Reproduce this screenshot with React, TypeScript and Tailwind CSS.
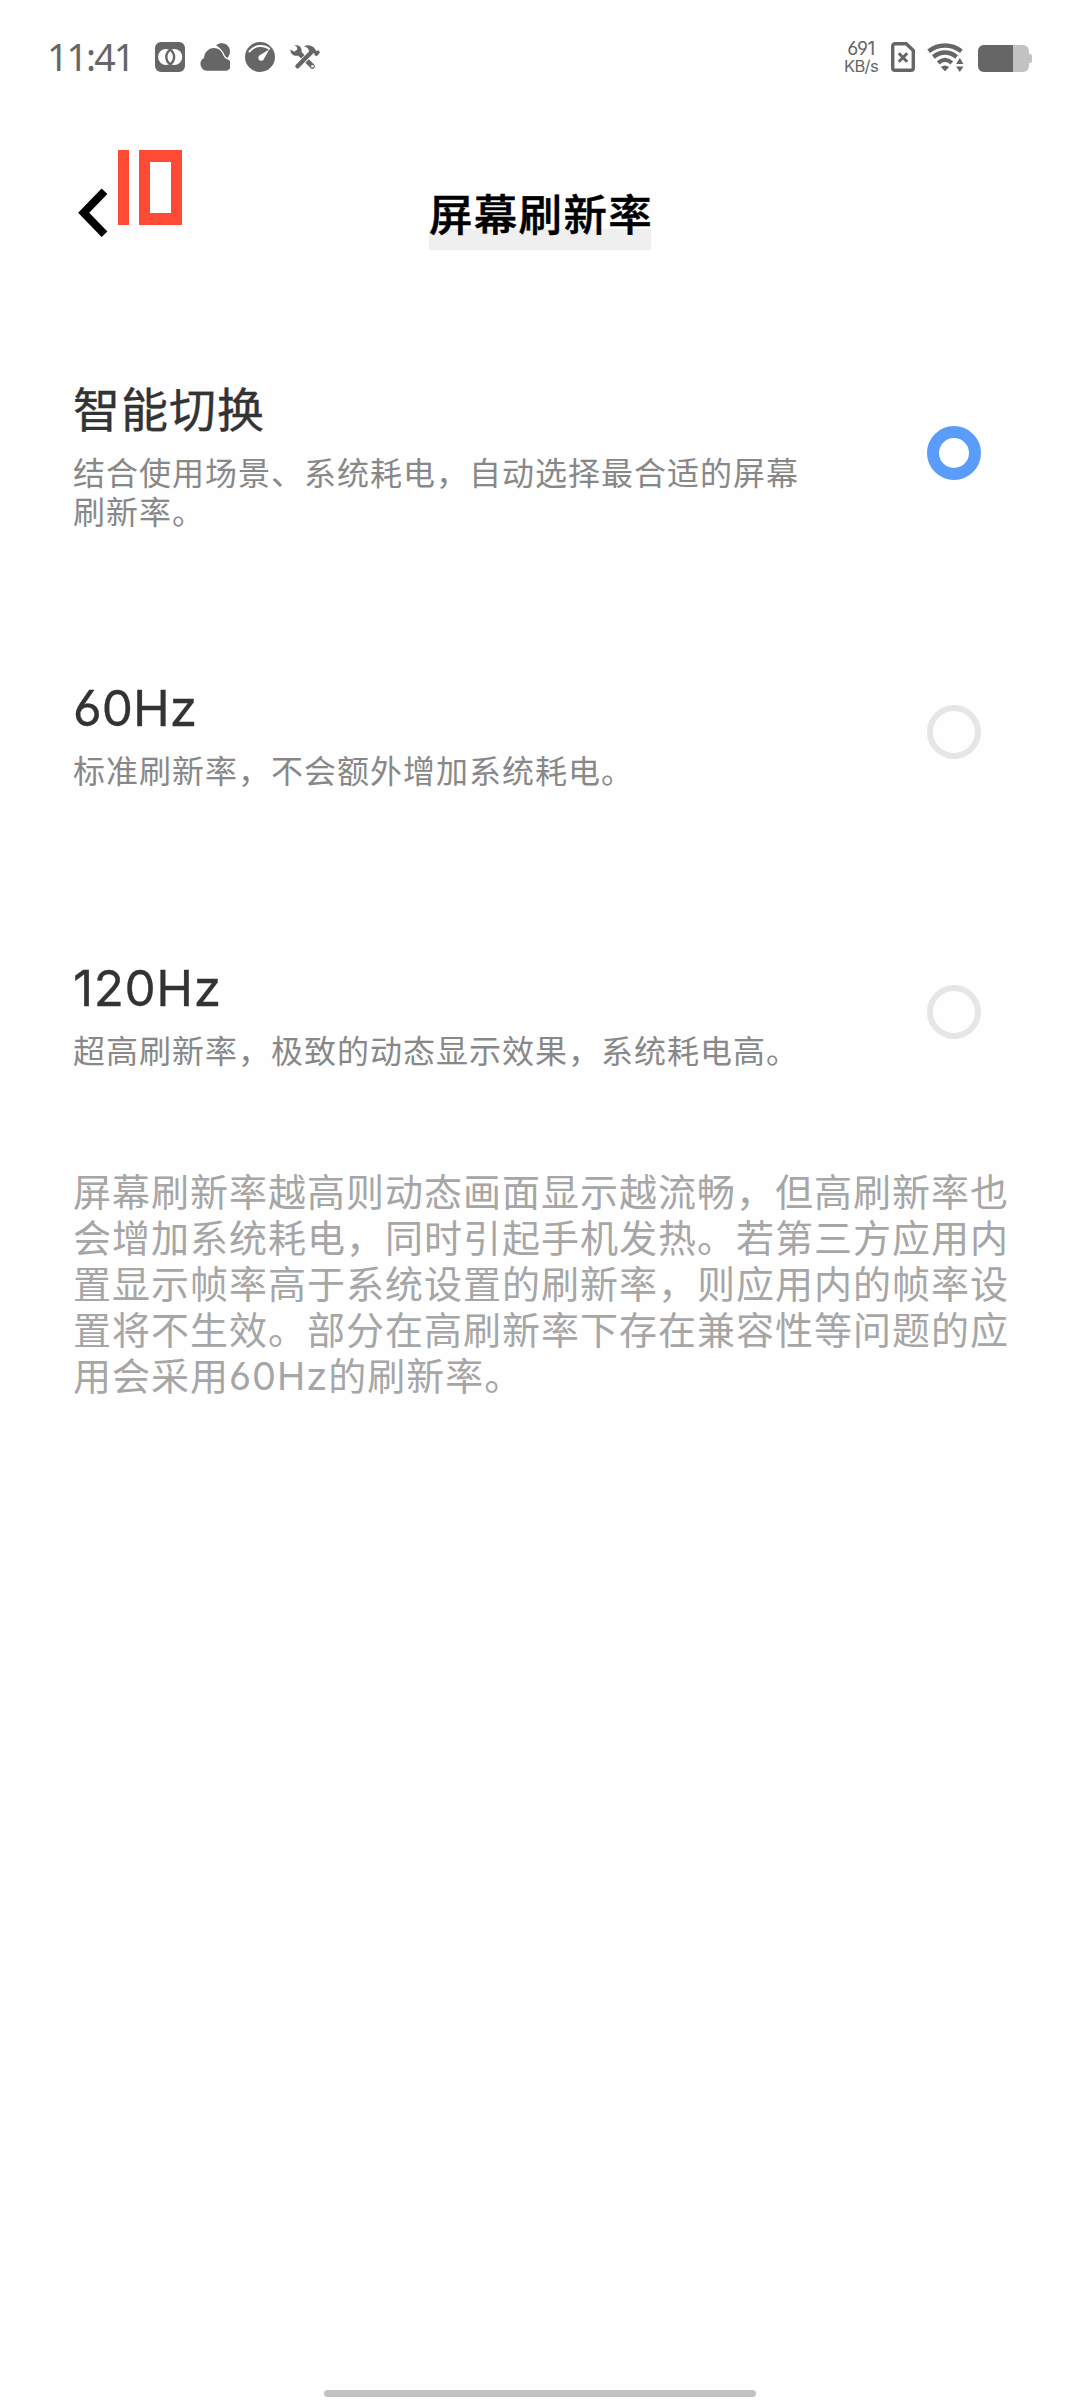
function StatusBar() {
  return (
    <div className="flex h-[114px] items-center justify-between pr-[48px] pl-[47px] text-[#666]">
      <div className="flex items-center">
        <span className="mb-[1px] w-[108px] font-['Noto_Sans',sans-serif] text-[37.500px] leading-none tracking-[-1.900px]">
          11:41
        </span>
        <div className="flex gap-[15px]">
          <svg width="30" height="30" viewBox="0 0 30 30">
            <rect width="30" height="30" rx="6" fill="currentColor" />
            <ellipse cx="11" cy="15" rx="7.9" ry="8" fill="#fff" />
            <ellipse cx="19.3" cy="15" rx="7.9" ry="8" fill="#fff" />
            <path d="M15.2 7.6c-5.200 4-5.200 10.800 0 14.800c5.200-4 5.200-10.800 0-14.800z" fill="#fff" stroke="currentColor" strokeWidth="2.400" />
          </svg>
          <svg width="30" height="30" viewBox="0 0 30 30" fill="currentColor">
            <path d="M6.500 28.700a6.800 6.800 0 0 1-2.500-12.700C4.200 10.500 8.500 6 13.800 6C18.500 6 21.800 8.800 23.300 13.500C24.500 15.500 25.500 16.700 27.500 17.300a6 6 0 0 1-3.500 11.400z" />
            <path d="M16 3.200C20.500-.5 27.500 1 29.500 6.400c1.100 3.700.2 7.200-2 9.600c-1-.5-2-1.200-2.600-2.200C23.500 9.500 20.600 6.300 16 3.200z" />
          </svg>
          <svg width="30" height="30" viewBox="0 0 30 30">
            <circle cx="15" cy="15" r="15" fill="currentColor" />
            <path d="M4.600 9.400C9.500 3 19 2.300 24.300 6.800" fill="none" stroke="#fff" strokeWidth="2" strokeLinecap="round" />
            <path d="M24.200 7.400L19.200 16.600a3 3 0 1 1-4.500-3.300z" fill="#fff" />
          </svg>
          <svg width="30" height="30" viewBox="0 0 30 30" fill="none" stroke="currentColor">
            <path d="M9 11L22.400 24.300" strokeWidth="5" strokeLinecap="round" />
            <path d="M4.500 3.600C8.500 2 12.500 5.500 11.500 10L8.500 13.500C4 14.800-.3 11.500.6 7.400L4.200 9.800L7.300 7.600L6.800 4.800z" fill="currentColor" stroke="none" />
            <circle cx="22.500" cy="24.300" r="1.300" fill="#fff" stroke="none" />
            <path d="M18 13.800L12.500 19.300" stroke="#fff" strokeWidth="6" />
            <path d="M21.800 9.800L7.500 24.300" strokeWidth="4.400" strokeLinecap="round" />
            <path d="M14 4.300C17 2.500 21.500 3 24.300 6L26.300 9L28.600 8.200L30 10.500L26.800 14.200L24.300 13L24.400 11L21.500 11.300L18.800 8.600C18.300 6.300 16.800 5 14 4.300z" fill="currentColor" stroke="none" />
          </svg>
        </div>
      </div>
      <div className="flex items-center">
        <div className="mr-[12px] flex w-[36px] flex-col items-center font-['Inter',sans-serif] whitespace-nowrap [font-feature-settings:'cv03','cv04']">
          <span className="text-[19px] leading-[16px] tracking-[-0.500px]">691</span>
          <span className="mt-[1px] text-[16.500px] leading-[16px] tracking-[-0.600px]">KB/s</span>
        </div>
        <svg className="mr-[12px]" width="24" height="30" viewBox="0 0 24 30" fill="none" stroke="currentColor">
          <path d="M4 1.700h11.200L22.300 8.500V26a2.300 2.300 0 0 1-2.300 2.300H4A2.300 2.300 0 0 1 1.700 26V4A2.300 2.300 0 0 1 4 1.700z" strokeWidth="3.400" />
          <path d="M7.800 11.300l8.400 8.400M16.200 11.300l-8.400 8.400" strokeWidth="3" />
        </svg>
        <svg className="mr-[13px]" width="38" height="30" viewBox="0 0 38 30" fill="none" stroke="currentColor" strokeWidth="4.300">
          <path d="M1.600 9.200C11.500 1.600 24.500 1.600 34.400 9.200" />
          <path d="M6.400 15C13.500 9 22.500 9 29.600 15" />
          <path d="M11.200 20.800C15.600 17 20.400 17 24.800 20.800" />
          <path d="M13.800 25q4.200-3.200 8.400 0L18 29.300z" fill="currentColor" stroke="none" />
          <path d="M32.800 16l3.700 6h-7.400zM32.800 30l3.700-5.500h-7.400z" fill="currentColor" stroke="none" />
        </svg>
        <div className="flex items-center">
          <div className="mt-[2px] flex h-[27px] w-[51px] overflow-hidden rounded-[6px] bg-[#c2c2c2]">
            <div className="w-[35px] bg-[#666]" />
          </div>
          <div className="mt-[2px] h-[9px] w-[3px] rounded-r-[2px] bg-[#c2c2c2]" />
        </div>
      </div>
    </div>
  );
}

/* Live frame-rate counter, drawn over the page by the developer overlay. */
function FrameRateOverlay() {
  return (
    <div aria-label="10" className="absolute top-[150px] left-[118px] flex h-[75px] gap-[10px]">
      <div className="w-[11px] bg-[#ff4a36]" />
      <div className="w-[43px] border-x-[11px] border-y-[12px] border-[#ff4a36]" />
    </div>
  );
}

function Header() {
  return (
    <header className="relative flex h-[199px] justify-center pt-[69px]">
      <svg className="absolute top-[74px] left-[78px]" width="30" height="50" viewBox="0 0 30 50" fill="none" stroke="#000" strokeWidth="8">
        <path d="M26.500 3.300L5.700 24.700L26.500 46.300" />
      </svg>
      <h1 className="flex h-[67px] w-[222px] items-start justify-center bg-[linear-gradient(#fefefe_0_46px,#efefef_46px)] pl-[2px] font-['Noto_Sans_CJK_SC',sans-serif] text-[43.500px] leading-[60px] font-medium tracking-[1.300px] whitespace-nowrap text-black [-webkit-text-stroke:0.500px_#000]">
        屏幕刷新率
      </h1>
    </header>
  );
}

function Radio({ checked }: { checked: boolean }) {
  return (
    <span
      className={
        checked
          ? "mt-[113px] block size-[54px] shrink-0 rounded-full border-[12px] border-[#5a9cfa]"
          : "mt-[113px] block size-[54px] shrink-0 rounded-full border-[6px] border-[#e6e6e6]"
      }
    />
  );
}

type Option = { title: string; description: string; checked: boolean; row: string; heading: string };

const options: Option[] = [
  {
    title: "智能切换",
    description: "结合使用场景、系统耗电，自动选择最合适的屏幕刷新率。",
    checked: true,
    row: "h-[279px] pt-[67px]",
    heading: "text-[47px] leading-[60px] tracking-[1px] text-[#333] [-webkit-text-stroke:0.400px_#333]",
  },
  {
    title: "60Hz",
    description: "标准刷新率，不会额外增加系统耗电。",
    checked: false,
    row: "h-[280px] pt-[86px]",
    heading: "text-[49.500px] leading-[60px] text-[#333] [-webkit-text-stroke:0.300px_#333]",
  },
  {
    title: "120Hz",
    description: "超高刷新率，极致的动态显示效果，系统耗电高。",
    checked: false,
    row: "h-[280px] pt-[86px]",
    heading: "text-[49.500px] leading-[60px] tracking-[0.600px] text-[#333] [-webkit-text-stroke:0.300px_#333]",
  },
];

function OptionRow({ option }: { option: Option }) {
  return (
    <li className="flex items-start justify-between pr-[99px] pl-[73px]">
      <div className={option.row}>
        <h2 className={option.heading}>{option.title}</h2>
        <p className="mt-[14px] w-[740px] text-[32px] leading-[39px] tracking-[1px] text-[#888]">{option.description}</p>
      </div>
      <Radio checked={option.checked} />
    </li>
  );
}

export default function App() {
  return (
    <div
      lang="zh-CN"
      className="relative flex h-[2400px] w-[1080px] flex-col overflow-hidden bg-[#fefefe] font-['Inter','Noto_Sans_CJK_SC',sans-serif] [font-feature-settings:'cv03','cv04']"
    >
      <StatusBar />
      <Header />
      <FrameRateOverlay />
      <ul>
        {options.map((option) => (
          <OptionRow key={option.title} option={option} />
        ))}
      </ul>
      <p className="mt-[17px] ml-[73px] w-[940px] text-[38px] leading-[46px] tracking-[1px] text-[#a6a6a6]">
        屏幕刷新率越高则动态画面显示越流畅，但高刷新率也会增加系统耗电，同时引起手机发热。若第三方应用内置显示帧率高于系统设置的刷新率，则应用内的帧率设置将不生效。部分在高刷新率下存在兼容性等问题的应用会采用60Hz的刷新率。
      </p>
      <div className="mx-auto mt-auto mb-[3px] h-[7px] w-[432px] rounded-full bg-[#c2c2c2]" />
    </div>
  );
}
